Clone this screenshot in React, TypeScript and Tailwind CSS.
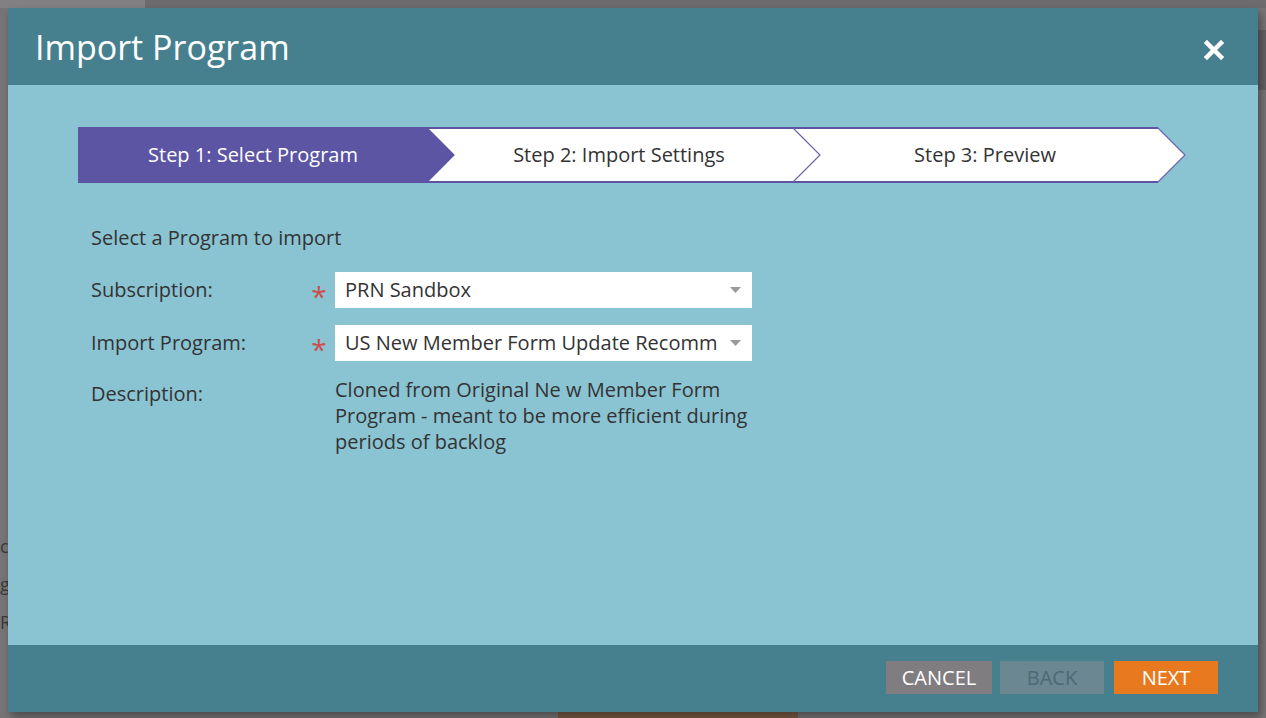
import React from "react";

const font = { fontFamily: '"Open Sans", "Noto Sans", sans-serif' };

function Steps() {
  return (
    <div className="relative h-[56px] w-[1110px]">
      <svg className="absolute inset-0" width="1110" height="56" viewBox="0 0 1110 56">
        <polygon points="0,0 350,0 377,28 350,56 0,56" fill="#5c55a4" />
        <polygon points="350,1 715,1 742,28 715,55 350,55 377,28" fill="#ffffff" />
        <polygon points="715,1 1080,1 1107,28 1080,55 715,55 742,28" fill="#ffffff" />
        <line x1="350" y1="1" x2="1080" y2="1" stroke="#5c55a4" strokeWidth="2" />
        <line x1="350" y1="55" x2="1080" y2="55" stroke="#5c55a4" strokeWidth="2" />
        <polyline points="715,1 742,28 715,55" fill="none" stroke="#6b64b0" strokeWidth="1.2" />
        <polyline points="1080,1 1107,28 1080,55" fill="none" stroke="#6b64b0" strokeWidth="1.2" />
      </svg>
      <div className="relative flex h-full items-center text-[20px]">
        <span className="w-[350px] text-center text-white">Step 1: Select Program</span>
        <span className="ml-[22px] w-[338px] text-center text-[#333333]">Step 2: Import Settings</span>
        <span className="ml-[28px] w-[338px] text-center text-[#333333]">Step 3: Preview</span>
      </div>
    </div>
  );
}

function Select({ value }: { value: string }) {
  return (
    <div className="flex h-[36px] w-[417px] items-center justify-between bg-white pl-[10px] pr-[11px] text-[20px] text-[#333333]">
      <span className="whitespace-nowrap">{value}</span>
      <svg width="11" height="6" viewBox="0 0 11 6">
        <polygon points="0,0 11,0 5.5,6" fill="#9a9a9a" />
      </svg>
    </div>
  );
}

function Row({ label, value }: { label: string; value: string }) {
  return (
    <div className="flex items-center">
      <span className="w-[218px] text-[20px] text-[#333333]">{label}</span>
      <span className="w-[20px] translate-y-[6px] text-center text-[28px] leading-none text-[#c9504e]">*</span>
      <div className="ml-[6px]">
        <Select value={value} />
      </div>
    </div>
  );
}

export default function App() {
  return (
    <div className="relative h-[718px] w-[1266px] overflow-hidden bg-[#777476]" style={font}>
      <div className="absolute left-0 top-0 h-[8px] w-[145px] bg-[#838083]" />
      <div className="absolute left-[145px] top-0 h-[8px] w-[1121px] bg-[#6d6b6d]" />
      <div className="absolute right-0 top-[30px] h-[60px] w-[8px] bg-[#636163]" />
      <div className="absolute left-[558px] top-[710px] h-[8px] w-[240px] bg-[#7a5a44]" />
      <div className="absolute left-0 top-[537px] text-[18px] leading-none text-[#3a3a3a]">c</div>
      <div className="absolute left-0 top-[575px] text-[18px] leading-none text-[#3a3a3a]">g</div>
      <div className="absolute left-0 top-[613px] text-[18px] leading-none text-[#3a3a3a]">R</div>
      <div className="pl-[8px] pt-[8px]">
        <div className="relative flex h-[704px] w-[1250px] flex-col shadow-[3px_5px_8px_rgba(0,0,0,0.35)]">
          <div className="flex h-[77px] items-center justify-between bg-[#46808f] pl-[27px] pr-[34px]">
            <h1 className="mt-[2px] text-[34px] font-normal text-white">Import Program</h1>
            <svg width="20" height="20" viewBox="0 0 20 20" className="mt-[6px]">
              <path d="M3 3 L17 17 M17 3 L3 17" stroke="#ffffff" strokeWidth="4.5" strokeLinecap="square" />
            </svg>
          </div>
          <div className="h-[560px] bg-[#8ac3d2] pl-[70px] pt-[42px]">
            <Steps />
            <div className="ml-[13px] mt-[42px] flex flex-col">
              <p className="text-[20px] leading-[26px] text-[#333333]">Select a Program to import</p>
              <div className="mt-[21px]">
                <Row label="Subscription:" value="PRN Sandbox" />
              </div>
              <div className="mt-[17px]">
                <Row label="Import Program:" value="US New Member Form Update Recomm" />
              </div>
              <div className="mt-[16px] flex">
                <span className="mt-[4px] w-[244px] text-[20px] leading-[26px] text-[#333333]">Description:</span>
                <p className="text-[20px] leading-[26px] text-[#333333]">
                  Cloned from Original Ne w Member Form
                  <br />
                  Program - meant to be more efficient during
                  <br />
                  periods of backlog
                </p>
              </div>
            </div>
          </div>
          <div className="flex h-[67px] items-start justify-end bg-[#46808f] pr-[40px] pt-[16px]">
            <button className="flex h-[33px] w-[106px] items-center justify-center bg-[#807d80] text-[20px] text-white">CANCEL</button>
            <button className="ml-[8px] flex h-[33px] w-[104px] items-center justify-center bg-[#6b8791] text-[20px] text-[#4c6a75]">BACK</button>
            <button className="ml-[10px] flex h-[33px] w-[104px] items-center justify-center bg-[#e8791f] text-[20px] text-white">NEXT</button>
          </div>
        </div>
      </div>
    </div>
  );
}
